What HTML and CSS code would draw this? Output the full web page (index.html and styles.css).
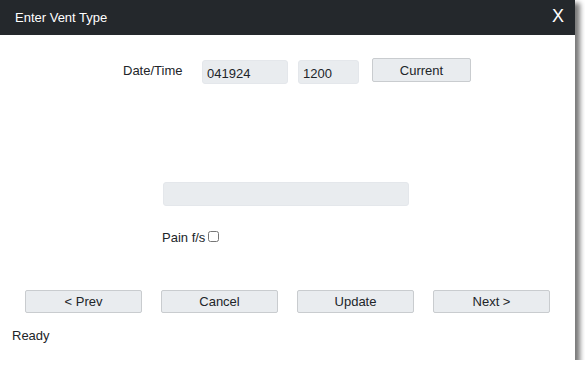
FILE: index.html
```html
<!DOCTYPE html>
<html lang="en">
<head>
    <meta charset="UTF-8">
    <meta name="viewport" content="width=device-width, initial-scale=1.0">
    <title>Enter Vent Type</title>
    <link rel="stylesheet" href="styles.css">
</head>
<body>
    <div class="dialog">
        <!-- Header -->
        <div class="dialog-header">
            <span class="dialog-title">Enter Vent Type</span>
            <span class="dialog-close">X</span>
        </div>

        <div class="dialog-body">
            <!-- Date / Time -->
            <div class="date-row">
                <label class="date-label">Date/Time</label>
                <input type="text" class="field field-date" value="041924" readonly>
                <input type="text" class="field field-time" value="1200" readonly>
                <button class="btn btn-current">Current</button>
            </div>

            <!-- Vent type -->
            <input type="text" class="field field-wide" readonly>

            <div class="pain-row">
                <label for="painFs">Pain f/s</label>
                <input type="checkbox" id="painFs" class="check">
            </div>

            <!-- Nav buttons -->
            <div class="nav-row">
                <button class="btn">&lt; Prev</button>
                <button class="btn">Cancel</button>
                <button class="btn">Update</button>
                <button class="btn">Next &gt;</button>
            </div>

            <div class="status">Ready</div>
        </div>
    </div>
</body>
</html>
```

FILE: styles.css
```css
body {
    margin: 0;
    background-color: #ffffff;
    font-family: "Liberation Sans", Arial, sans-serif;
    font-size: 13px;
    color: #212529;
}
.dialog {
    width: 575px;
    height: 360px;
    background-color: #ffffff;
    box-shadow: 4px 4px 5px 1px #7a7a7a;
}
.dialog-header {
    height: 35px;
    background-color: #24282c;
    color: #ffffff;
    display: flex;
    align-items: center;
    justify-content: space-between;
    padding: 0 11px 0 15px;
}
.dialog-title {
    font-size: 13px;
}
.dialog-close {
    font-size: 18px;
    margin-top: -2px;
}
.dialog-body {
    padding: 23px 0 0 0;
}
.date-row {
    display: flex;
    align-items: flex-start;
    padding-left: 123px;
    height: 25px;
}
.date-label {
    margin-top: 5px;
    width: 79px;
}
.field {
    box-sizing: border-box;
    height: 24px;
    border: 1px solid #e4e7eb;
    border-radius: 3px;
    background-color: #e9ecef;
    font-family: "Liberation Sans", Arial, sans-serif;
    font-size: 13px;
    color: #212529;
    padding: 2px 4px 0 4px;
    margin-top: 2px;
}
.field-date {
    width: 86px;
}
.field-time {
    width: 61px;
    margin-left: 10px;
}
.btn {
    box-sizing: border-box;
    height: 24px;
    background-color: #e9ecef;
    border: 1px solid #c9cccf;
    border-radius: 2px;
    font-family: "Liberation Sans", Arial, sans-serif;
    font-size: 13px;
    color: #212529;
    padding: 0;
}
.btn-current {
    width: 99px;
    margin-left: 13px;
}
.field-wide {
    display: block;
    width: 246px;
    margin: 99px 0 0 163px;
}
.pain-row {
    display: flex;
    align-items: center;
    margin: 23px 0 0 162px;
    height: 16px;
}
.check {
    margin: -2px 0 0 3px;
    width: 11px;
    height: 11px;
}
.nav-row {
    display: grid;
    grid-template-columns: repeat(4, 117px);
    column-gap: 19px;
    margin: 45px 0 0 25px;
}
.nav-row .btn {
    height: 23px;
}
.status {
    margin: 15px 0 0 12px;
}
```
